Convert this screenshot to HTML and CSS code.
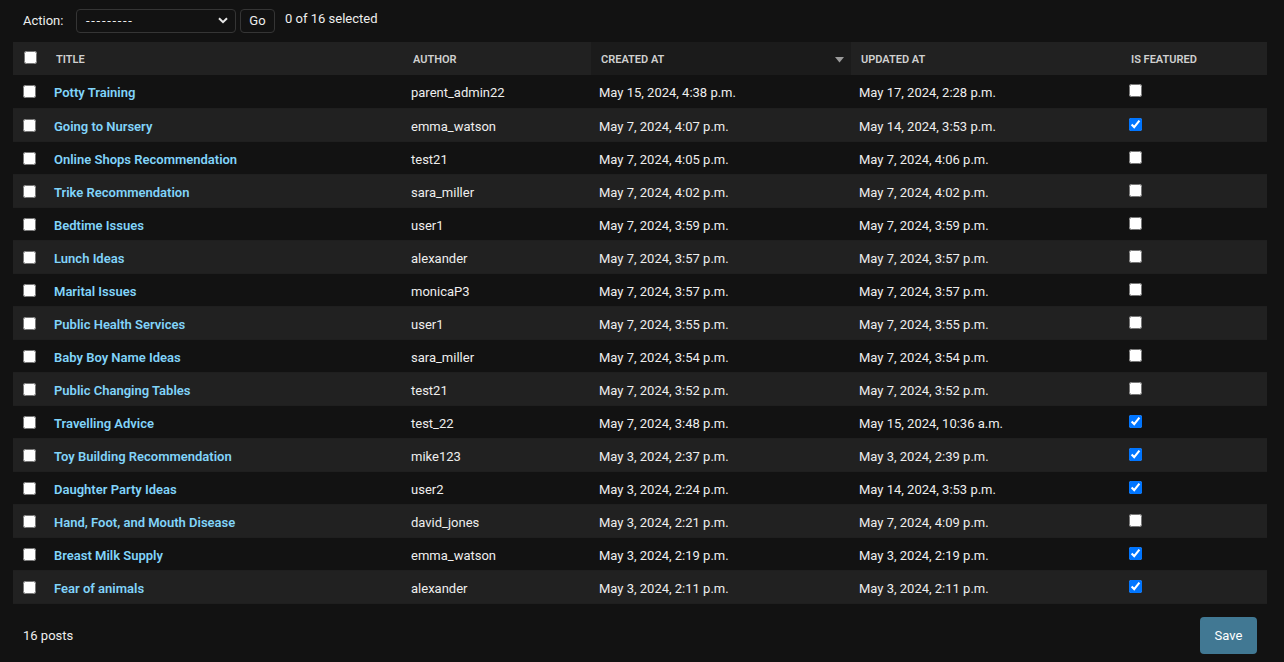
FILE: index.html
```html
<!DOCTYPE html>
<html lang="en">
<head>
<meta charset="utf-8">
<title>Posts</title>
<link rel="stylesheet" href="styles.css">
</head>
<body>
<div class="changelist">
  <div class="actions">
    <label class="action-label">Action:</label>
    <div class="select">
      <span class="dashes">---------</span>
      <svg class="chev" width="10" height="7" viewBox="0 0 10 7"><path d="M1 1.2 L5 5.2 L9 1.2" fill="none" stroke="#e8e8e8" stroke-width="2"/></svg>
    </div>
    <button class="go" type="button">Go</button>
    <span class="counter">0 of 16 selected</span>
  </div>
  <table class="results">
    <colgroup>
      <col style="width:33px"><col style="width:357px"><col style="width:188px"><col style="width:260px"><col style="width:270px"><col style="width:146px">
    </colgroup>
    <thead>
      <tr>
        <th class="cb"><input type="checkbox"></th>
        <th><span class="text">Title</span></th>
        <th><span class="text">Author</span></th>
        <th class="sorted"><span class="text">Created at</span><svg class="sort" width="9" height="6" viewBox="0 0 9 6"><path d="M0 0 H9 L4.5 5.5 Z" fill="#9a9a9a"/></svg></th>
        <th><span class="text">Updated at</span></th>
        <th><span class="text">Is featured</span></th>
      </tr>
    </thead>
    <tbody>
      <tr><td class="cb"><input type="checkbox"></td><th><a href="#">Potty Training</a></th><td>parent_admin22</td><td>May 15, 2024, 4:38 p.m.</td><td>May 17, 2024, 2:28 p.m.</td><td class="feat"><input type="checkbox"></td></tr>
      <tr><td class="cb"><input type="checkbox"></td><th><a href="#">Going to Nursery</a></th><td>emma_watson</td><td>May 7, 2024, 4:07 p.m.</td><td>May 14, 2024, 3:53 p.m.</td><td class="feat"><input type="checkbox" checked></td></tr>
      <tr><td class="cb"><input type="checkbox"></td><th><a href="#">Online Shops Recommendation</a></th><td>test21</td><td>May 7, 2024, 4:05 p.m.</td><td>May 7, 2024, 4:06 p.m.</td><td class="feat"><input type="checkbox"></td></tr>
      <tr><td class="cb"><input type="checkbox"></td><th><a href="#">Trike Recommendation</a></th><td>sara_miller</td><td>May 7, 2024, 4:02 p.m.</td><td>May 7, 2024, 4:02 p.m.</td><td class="feat"><input type="checkbox"></td></tr>
      <tr><td class="cb"><input type="checkbox"></td><th><a href="#">Bedtime Issues</a></th><td>user1</td><td>May 7, 2024, 3:59 p.m.</td><td>May 7, 2024, 3:59 p.m.</td><td class="feat"><input type="checkbox"></td></tr>
      <tr><td class="cb"><input type="checkbox"></td><th><a href="#">Lunch Ideas</a></th><td>alexander</td><td>May 7, 2024, 3:57 p.m.</td><td>May 7, 2024, 3:57 p.m.</td><td class="feat"><input type="checkbox"></td></tr>
      <tr><td class="cb"><input type="checkbox"></td><th><a href="#">Marital Issues</a></th><td>monicaP3</td><td>May 7, 2024, 3:57 p.m.</td><td>May 7, 2024, 3:57 p.m.</td><td class="feat"><input type="checkbox"></td></tr>
      <tr><td class="cb"><input type="checkbox"></td><th><a href="#">Public Health Services</a></th><td>user1</td><td>May 7, 2024, 3:55 p.m.</td><td>May 7, 2024, 3:55 p.m.</td><td class="feat"><input type="checkbox"></td></tr>
      <tr><td class="cb"><input type="checkbox"></td><th><a href="#">Baby Boy Name Ideas</a></th><td>sara_miller</td><td>May 7, 2024, 3:54 p.m.</td><td>May 7, 2024, 3:54 p.m.</td><td class="feat"><input type="checkbox"></td></tr>
      <tr><td class="cb"><input type="checkbox"></td><th><a href="#">Public Changing Tables</a></th><td>test21</td><td>May 7, 2024, 3:52 p.m.</td><td>May 7, 2024, 3:52 p.m.</td><td class="feat"><input type="checkbox"></td></tr>
      <tr><td class="cb"><input type="checkbox"></td><th><a href="#">Travelling Advice</a></th><td>test_22</td><td>May 7, 2024, 3:48 p.m.</td><td>May 15, 2024, 10:36 a.m.</td><td class="feat"><input type="checkbox" checked></td></tr>
      <tr><td class="cb"><input type="checkbox"></td><th><a href="#">Toy Building Recommendation</a></th><td>mike123</td><td>May 3, 2024, 2:37 p.m.</td><td>May 3, 2024, 2:39 p.m.</td><td class="feat"><input type="checkbox" checked></td></tr>
      <tr><td class="cb"><input type="checkbox"></td><th><a href="#">Daughter Party Ideas</a></th><td>user2</td><td>May 3, 2024, 2:24 p.m.</td><td>May 14, 2024, 3:53 p.m.</td><td class="feat"><input type="checkbox" checked></td></tr>
      <tr><td class="cb"><input type="checkbox"></td><th><a href="#">Hand, Foot, and Mouth Disease</a></th><td>david_jones</td><td>May 3, 2024, 2:21 p.m.</td><td>May 7, 2024, 4:09 p.m.</td><td class="feat"><input type="checkbox"></td></tr>
      <tr><td class="cb"><input type="checkbox"></td><th><a href="#">Breast Milk Supply</a></th><td>emma_watson</td><td>May 3, 2024, 2:19 p.m.</td><td>May 3, 2024, 2:19 p.m.</td><td class="feat"><input type="checkbox" checked></td></tr>
      <tr><td class="cb"><input type="checkbox"></td><th><a href="#">Fear of animals</a></th><td>alexander</td><td>May 3, 2024, 2:11 p.m.</td><td>May 3, 2024, 2:11 p.m.</td><td class="feat"><input type="checkbox" checked></td></tr>
    </tbody>
  </table>
  <div class="paginator">
    <span>16 posts</span>
    <button class="save" type="button">Save</button>
  </div>
</div>
</body>
</html>
```

FILE: styles.css
```css
html, body {
  margin: 0;
  padding: 0;
  background: #121212;
}
body {
  font-family: Roboto, "Open Sans", "Liberation Sans", sans-serif;
  font-size: 13px;
  color: #eeeeee;
}
.changelist {
  padding: 0 17px 0 13px;
}
.actions {
  display: flex;
  align-items: center;
  height: 42px;
  padding: 0 10px 1px;
  box-sizing: border-box;
  color: #eeeeee;
}
.action-label {
  width: 53px;
  font-size: 13px;
}
.select {
  width: 160px;
  height: 24px;
  box-sizing: border-box;
  border: 1px solid #353535;
  border-radius: 4px;
  background: #121212;
  display: flex;
  align-items: center;
  justify-content: space-between;
  padding: 0 7px 0 9px;
  font-size: 13px;
  color: #eeeeee;
}
.dashes {
  letter-spacing: 1.7px;
}
.chev { display: block; }
.go {
  margin-left: 4px;
  width: 35px;
  height: 24px;
  border: 1px solid #353535;
  border-radius: 4px;
  background: #121212;
  color: #eeeeee;
  font-family: inherit;
  font-size: 13px;
  padding: 0;
}
.counter {
  margin-left: 10px;
  font-size: 13px;
  color: #eeeeee;
  position: relative;
  top: -2px;
}
.results {
  width: 1254px;
  border-collapse: collapse;
  table-layout: fixed;
}
.results thead th {
  background: #212121;
  color: #d0d0d0;
  font-size: 11px;
  font-weight: 600;
  text-transform: uppercase;
  text-align: left;
  padding: 1px 0 0;
  height: 33px;
  white-space: nowrap;
  vertical-align: middle;
  position: relative;
  box-sizing: border-box;
}
.results thead th .text {
  display: block;
  padding: 0 10px;
}
.results thead th.sorted {
  background: #1b1b1b;
}
.results thead th.cb {
  padding: 0 0 0 11px;
  vertical-align: top;
}
.sort {
  position: absolute;
  right: 7px;
  top: 15px;
}
.results input[type=checkbox] {
  margin: 0;
  width: 13px;
  height: 13px;
  display: block;
}
.results thead th.cb input { margin-top: 9px; }
.results tbody td, .results tbody th {
  padding: 9px 8px 0;
  height: 33px;
  line-height: 17px;
  text-align: left;
  vertical-align: top;
  font-size: 13px;
  color: #eeeeee;
  border-bottom: 1px solid #1f1f1f;
  box-sizing: border-box;
}
.results tbody tr:nth-child(even) td,
.results tbody tr:nth-child(even) th {
  background: #212121;
}
.results tbody th {
  font-weight: 600;
}
.results tbody th a {
  color: #81d4fa;
  text-decoration: none;
}
.results tbody td.cb {
  padding: 10px 0 0 10px;
}
.results tbody td.feat {
  padding-top: 9px;
}
.paginator {
  display: flex;
  justify-content: space-between;
  align-items: center;
  padding: 13px 10px 0 10px;
  font-size: 13px;
  color: #eeeeee;
}
.save {
  background: #417893;
  color: #ffffff;
  border: none;
  border-radius: 4px;
  height: 37px;
  width: 57px;
  font-family: inherit;
  font-size: 13px;
  padding: 1px 0 0;
}
```
